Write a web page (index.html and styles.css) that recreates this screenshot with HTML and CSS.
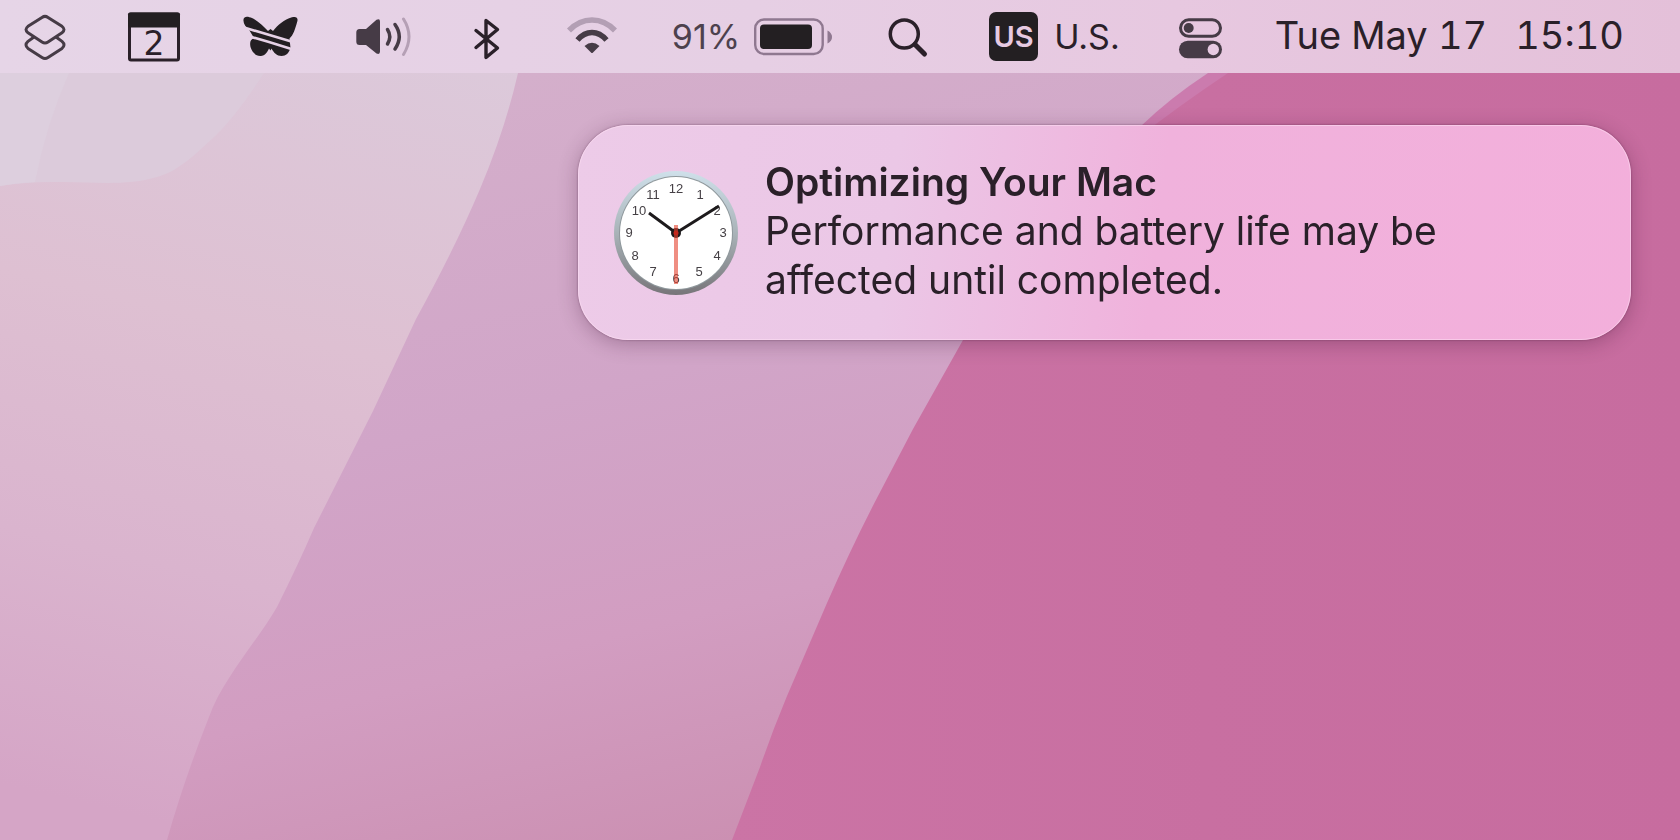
FILE: index.html
```html
<!DOCTYPE html>
<html lang="en">
<head>
    <meta charset="UTF-8">
    <meta name="viewport" content="width=device-width, initial-scale=1.0">
    <title>Desktop</title>
    <link rel="stylesheet" href="styles.css">
</head>
<body>
    <!-- Wallpaper -->
    <svg class="wallpaper" viewBox="0 0 1680 840" preserveAspectRatio="none" aria-hidden="true">
        <defs>
            <linearGradient id="hill-left" x1="0.600" y1="0" x2="0.450" y2="1">
                <stop offset="0" stop-color="#dccadb"/>
                <stop offset="0.400" stop-color="#dec0d2"/>
                <stop offset="0.700" stop-color="#dab4ce"/>
                <stop offset="1" stop-color="#d5a5c6"/>
            </linearGradient>
            <linearGradient id="hill-middle" gradientUnits="userSpaceOnUse" x1="520" y1="73" x2="720" y2="860">
                <stop offset="0" stop-color="#d4afcb"/>
                <stop offset="0.400" stop-color="#d1a5c8"/>
                <stop offset="0.700" stop-color="#d29dc1"/>
                <stop offset="1" stop-color="#cb8fb1"/>
            </linearGradient>
            <linearGradient id="hill-right" x1="0" y1="0" x2="1" y2="0">
                <stop offset="0" stop-color="#cb74a5"/>
                <stop offset="0.500" stop-color="#c86fa1"/>
                <stop offset="1" stop-color="#c76c9f"/>
            </linearGradient>
        </defs>
        <rect width="1680" height="840" fill="url(#hill-middle)"/>
        <path fill="url(#hill-left)" d="M0 0H528L518 73Q505 130 480 189T416 319L373 411L314 528Q298 565 277 607C258 640 222 680 209 717Q184 780 167 840H0Z"/>
        <path fill="#dccbdb" d="M0 0H300L264 73C245 102 230 122 214 137C190 160 175 172 157 177C125 187 85 181 54 182Q25 182 0 186Z"/>
        <path fill="#ddcfde" d="M0 0H90L69 73Q46 125 35 182Q15 183 0 186Z"/>
        <path fill="#cb7bae" d="M1300 30L1208 73Q1170 98 1141 126L1250 140Z"/>
        <path fill="url(#hill-right)" d="M1680 0H1320Q1265 45 1228 73Q1180 105 1135 140Q1020 235 963 340L913 429L878 496Q852 546 827 603L787 696Q772 732 760 767L732 840H1680Z"/>
    </svg>

    <header class="menu-bar">
        <button class="menu-item" type="button" aria-label="Shortcuts">
            <svg width="56" height="53" viewBox="0 0 56 53" fill="none" stroke="#463b46" stroke-width="3" stroke-linejoin="round">
                <path d="M25 7.4Q28 5.4 31 7.4L45 16.3Q49 19.5 45 22.8L31 32Q28 34 25 32L11 22.8Q7 19.5 11 16.3Z"/>
                <path d="M17 27L11 31.4Q7 35 11 38.4L25 47.5Q28 49.5 31 47.5L45 38.4Q49 35 45 31.4L39 27"/>
            </svg>
        </button>
        <button class="menu-item" type="button" aria-label="Calendar">
            <svg width="62" height="53" viewBox="0 0 62 53">
                <rect x="6.5" y="4" width="49" height="46" rx="1.5" fill="none" stroke="#2a2029" stroke-width="3"/>
                <rect x="5" y="2.5" width="52" height="15" rx="2" fill="#231f22"/>
                <text class="calendar-day" x="31" y="45" text-anchor="middle">2</text>
            </svg>
        </button>
        <button class="menu-item" type="button" aria-label="Butterfly">
            <svg width="71" height="53" viewBox="0 0 71 53">
                <g fill="#231f22">
                    <path d="M8.500 9.500C9 5.500 13.500 6.500 17 8C23 11 29 17 33 21L35.500 19L38 21C43 15 49 9.500 57 7.300C62 6 63.500 8.500 62 12.500C60 19 58.500 25 54.500 28.500L55.500 38C54 43 51 46 46.500 46C42 46 38.500 42.500 36.500 38.500L35.500 40.500L34 38.500C32.500 42 30 45.500 27 45.800C21 47 17 42 15.500 37C14.500 32 15.500 29.500 19 28L14.500 20.500C11 17 8 13.500 8.500 9.500Z"/>
                </g>
                <g fill="none" stroke="#e6d2e6" stroke-width="2.600">
                    <path d="M9 17.500L58 32"/>
                    <path d="M13 26L34 32L58 39.500"/>
                </g>
            </svg>
        </button>
        <button class="menu-item" type="button" aria-label="Volume">
            <svg width="55" height="53" viewBox="0 0 55 53" fill="none" stroke="#463b46" stroke-width="3.500" stroke-linecap="round">
                <path fill="#463b46" stroke="none" d="M3.500 19H10L20.500 9.800Q24 8 24 11.500V41.500Q24 45 20.500 43.500L10 35H3.500Q.3 35 .3 31.500V22.500Q.3 19 3.500 19Z"/>
                <path d="M31.500 19.500Q36 26.500 31.500 34"/>
                <path d="M39 14.500Q47.500 26.500 39 39"/>
                <path stroke="#b5a0b5" stroke-width="3" d="M47.500 9Q58.500 26.500 47.500 44.500"/>
            </svg>
        </button>
        <button class="menu-item" type="button" aria-label="Bluetooth">
            <svg width="51" height="53" viewBox="0 0 51 53" fill="none" stroke="#2a2029" stroke-width="3.400" stroke-linecap="round" stroke-linejoin="round">
                <path d="M15 20.500L36.500 38L25 47.500V10.500L36.500 19.500L15 37.500"/>
            </svg>
        </button>
        <button class="menu-item" type="button" aria-label="Wi-Fi">
            <svg width="60" height="53" viewBox="0 0 60 53" fill="none" stroke-width="5.500">
                <path stroke="#b39fb4" d="M7 20.500Q17 10 30 10T53 20.500"/>
                <path stroke="#463b46" d="M15.500 30Q22 22.500 30 22.500T44.500 30"/>
                <path fill="#463b46" d="M22.500 36Q30 29.500 37.500 36L31 42.500Q30 43.500 29 42.500Z"/>
            </svg>
        </button>
        <button class="menu-item battery" type="button">
            <span>91%</span>
            <svg width="78" height="53" viewBox="0 0 78 53" aria-hidden="true">
                <rect x="1.200" y="9.500" width="67.500" height="34.500" rx="9" fill="none" stroke="#8f7890" stroke-width="2.400"/>
                <rect x="6" y="14.500" width="52" height="24.500" rx="4" fill="#231f22"/>
                <path fill="#8f7890" d="M73.500 20.500Q78 23 78 27T73.500 33.500Z"/>
            </svg>
        </button>
        <button class="menu-item" type="button" aria-label="Search">
            <svg width="51" height="53" viewBox="0 0 51 53" fill="none" stroke="#2a2029">
                <circle cx="22.300" cy="24" r="14" stroke-width="3.500"/>
                <path stroke-width="5" stroke-linecap="round" d="M33 34.500L42.500 44"/>
            </svg>
        </button>
        <button class="menu-item input-source" type="button">
            <span class="input-badge">US</span>
            <span>U.S.</span>
        </button>
        <button class="menu-item" type="button" aria-label="Control Center">
            <svg width="49" height="53" viewBox="0 0 49 53">
                <rect x="4.500" y="9.800" width="40" height="16.500" rx="8.250" fill="none" stroke="#463b46" stroke-width="3"/>
                <circle cx="12.700" cy="18" r="5" fill="#463b46"/>
                <rect x="3" y="30.700" width="43" height="17.500" rx="8.750" fill="#463b46"/>
                <circle cx="37.300" cy="39.500" r="5.700" fill="#e7cae2"/>
            </svg>
        </button>
        <button class="menu-item clock" type="button">
            <span>Tue May 17</span>
            <span>15:10</span>
        </button>
    </header>

    <main class="desktop">
        <section class="notification" role="status">
            <svg class="notification-icon" width="128" height="128" viewBox="-64 -64 128 128" aria-hidden="true">
                <defs>
                    <linearGradient id="rim" x1="0" y1="0" x2="0" y2="1">
                        <stop offset="0" stop-color="#cfe0ea"/>
                        <stop offset="0.500" stop-color="#a9b3b8"/>
                        <stop offset="1" stop-color="#777579"/>
                    </linearGradient>
                </defs>
                <circle r="62" fill="url(#rim)"/>
                <circle r="57" fill="#8f989c"/>
                <circle r="56" fill="#fff"/>
                <g class="clock-numbers">
                    <text x="0" y="-40">12</text>
                    <text x="24" y="-34">1</text>
                    <text x="41" y="-18">2</text>
                    <text x="47" y="4">3</text>
                    <text x="41" y="27">4</text>
                    <text x="23" y="43">5</text>
                    <text x="0" y="50">6</text>
                    <text x="-23" y="43">7</text>
                    <text x="-41" y="27">8</text>
                    <text x="-47" y="4">9</text>
                    <text x="-37" y="-18">10</text>
                    <text x="-23" y="-34">11</text>
                </g>
                <path fill="none" stroke="#1d1a1c" stroke-width="3" d="M-27 -20L0 0L43 -27"/>
                <circle r="5" fill="#1d1a1c"/>
                <path stroke="#e5432f" stroke-opacity="0.600" stroke-width="4" d="M0 -8V51"/>
                <circle r="2.500" fill="#c4271c"/>
            </svg>
            <div class="notification-text">
                <h1>Optimizing Your Mac</h1>
                <p>Performance and battery life may be affected until completed.</p>
            </div>
        </section>
    </main>
</body>
</html>
```
FILE: styles.css
```css
* {
    box-sizing: border-box;
}
body {
    margin: 0;
    min-height: 100vh;
    font-family: Inter, 'Liberation Sans', Arial, sans-serif;
    color: #2a2029;
    background-color: #d2a4c8;
    overflow: hidden;
}
.wallpaper {
    position: fixed;
    inset: 0;
    z-index: -1;
    width: 100%;
    height: 100%;
}
.menu-bar {
    display: flex;
    justify-content: flex-end;
    align-items: center;
    gap: 50px;
    height: 73px;
    padding-right: 56px;
    background: linear-gradient(90deg, #e6d5e7, #e6cfe4 45%, #e7c8e0 70%, #e4c0d9);
}
.menu-item {
    display: flex;
    flex-shrink: 0;
    align-items: center;
    padding: 0;
    border: none;
    background: none;
    color: inherit;
    font-family: inherit;
    font-size: 34px;
    white-space: nowrap;
}
.menu-item svg {
    display: block;
}
.calendar-day {
    font-family: 'DejaVu Sans', sans-serif;
    font-size: 33px;
    fill: #2a2029;
}
.battery {
    gap: 14px;
    color: #4d414d;
}
.input-source {
    gap: 16px;
    padding: 0 6px;
}
.input-badge {
    width: 49px;
    height: 49px;
    border-radius: 7px;
    background-color: #231f22;
    color: #e7cae2;
    font-size: 29px;
    font-weight: 600;
    line-height: 49px;
    text-align: center;
}
.clock {
    gap: 28px;
    padding-bottom: 4px;
    font-size: 38px;
    font-variant-numeric: tabular-nums;
}
.desktop {
    padding: 52px 49px 0;
}
.notification {
    display: flex;
    align-items: center;
    gap: 25px;
    max-width: 1053px;
    min-height: 214px;
    margin-left: auto;
    padding: 32px 34px;
    border-radius: 50px;
    background: linear-gradient(97deg, #edcbe8, #ebc7e6 30%, #f0b2dc 55%, #f3afdb);
    box-shadow: 0 0 2px rgba(60, 20, 50, 0.5), 0 4px 20px rgba(60, 20, 50, 0.3), inset 0 0 0 1px rgba(255, 225, 245, 0.5);
}
.notification-icon {
    flex-shrink: 0;
}
.clock-numbers {
    font-family: 'Liberation Sans', Arial, sans-serif;
    font-size: 13px;
    fill: #454045;
    text-anchor: middle;
}
.notification-text {
    max-width: 720px;
    padding-bottom: 4px;
    font-size: 39px;
    line-height: 49px;
}
.notification-text h1,
.notification-text p {
    margin: 0;
    font-size: inherit;
}
.notification-text h1 {
    font-weight: 600;
}
```
